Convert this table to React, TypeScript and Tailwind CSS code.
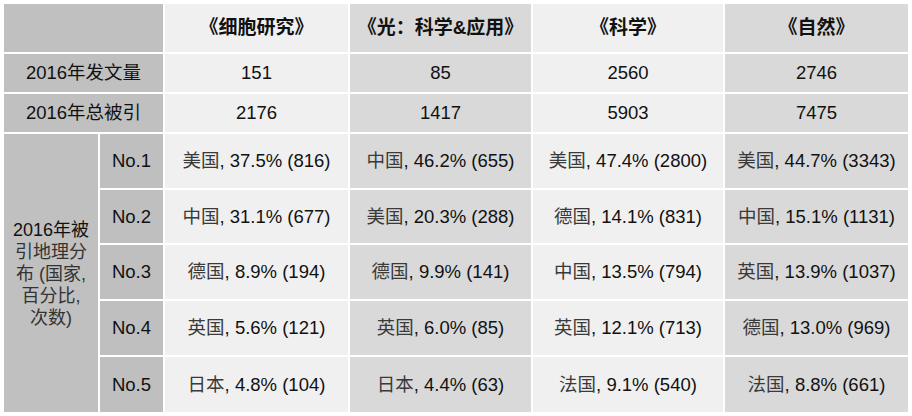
import React from 'react'

const journals = ['《细胞研究》', '《光：科学&应用》', '《科学》', '《自然》']
const published = ['151', '85', '2560', '2746']
const cited = ['2176', '1417', '5903', '7475']

// [country, rest] per rank, per journal
const ranks: [string, string][][] = [
  [['美国', ', 37.5% (816)'], ['中国', ', 46.2% (655)'], ['美国', ', 47.4% (2800)'], ['美国', ', 44.7% (3343)']],
  [['中国', ', 31.1% (677)'], ['美国', ', 20.3% (288)'], ['德国', ', 14.1% (831)'], ['中国', ', 15.1% (1131)']],
  [['德国', ', 8.9% (194)'], ['德国', ', 9.9% (141)'], ['中国', ', 13.5% (794)'], ['英国', ', 13.9% (1037)']],
  [['英国', ', 5.6% (121)'], ['英国', ', 6.0% (85)'], ['英国', ', 12.1% (713)'], ['德国', ', 13.0% (969)']],
  [['日本', ', 4.8% (104)'], ['日本', ', 4.4% (63)'], ['法国', ', 9.1% (540)'], ['法国', ', 8.8% (661)']],
]

const colBg = ['bg-[#f0f0f0]', 'bg-[#d9d9d9]', 'bg-[#f0f0f0]', 'bg-[#d9d9d9]']

const cell = 'flex items-center justify-center text-center'

const App = () => {
  return (
    <div
      className="w-[912px] h-[416px] bg-white pl-[4px] pt-[4px] text-[18.5px] text-[#111]"
      style={{ fontFamily: '"Liberation Sans", Arial, "Noto Sans CJK SC", sans-serif' }}
    >
      <div className="grid grid-cols-[94px_63px_183px_181px_190px_183px] grid-rows-[48px_38px_38px_54px_53px_54px_54px_55px] gap-[2px]">
        {/* header row */}
        <div className="col-span-2 bg-[#c0c0c0]" />
        {journals.map((j, i) => (
          <div key={j} className={`${cell} ${colBg[i]} font-bold text-[19px]`}>
            {j}
          </div>
        ))}

        {/* published */}
        <div className={`${cell} col-span-2 bg-[#c0c0c0]`}>2016年发文量</div>
        {published.map((v, i) => (
          <div key={i} className={`${cell} ${colBg[i]}`}>{v}</div>
        ))}

        {/* total cited */}
        <div className={`${cell} col-span-2 bg-[#c0c0c0]`}>2016年总被引</div>
        {cited.map((v, i) => (
          <div key={i} className={`${cell} ${colBg[i]}`}>{v}</div>
        ))}

        {/* geography */}
        <div className={`${cell} row-span-5 bg-[#c0c0c0] text-[18px] leading-[22px] pt-[2px]`}>
          <span>
            2016年被<br />
            <span className="text-[#333]">引地理分</span><br />
            <span className="text-[#333]">布 (国家,</span><br />
            <span className="text-[#333]">百分比,</span><br />
            <span className="text-[#333]">次数)</span>
          </span>
        </div>
        {ranks.map((row, r) => (
          <React.Fragment key={r}>
            <div className={`${cell} bg-[#bfbfbf]`} style={{ gridColumnStart: 2 }}>
              No.{r + 1}
            </div>
            {row.map(([country, rest], i) => (
              <div key={i} className={`${cell} ${colBg[i]}`}>
                <span className="text-[#3a3a3a]">{country}</span>
                <span className="whitespace-pre">{rest}</span>
              </div>
            ))}
          </React.Fragment>
        ))}
      </div>
    </div>
  )
}

export default App
